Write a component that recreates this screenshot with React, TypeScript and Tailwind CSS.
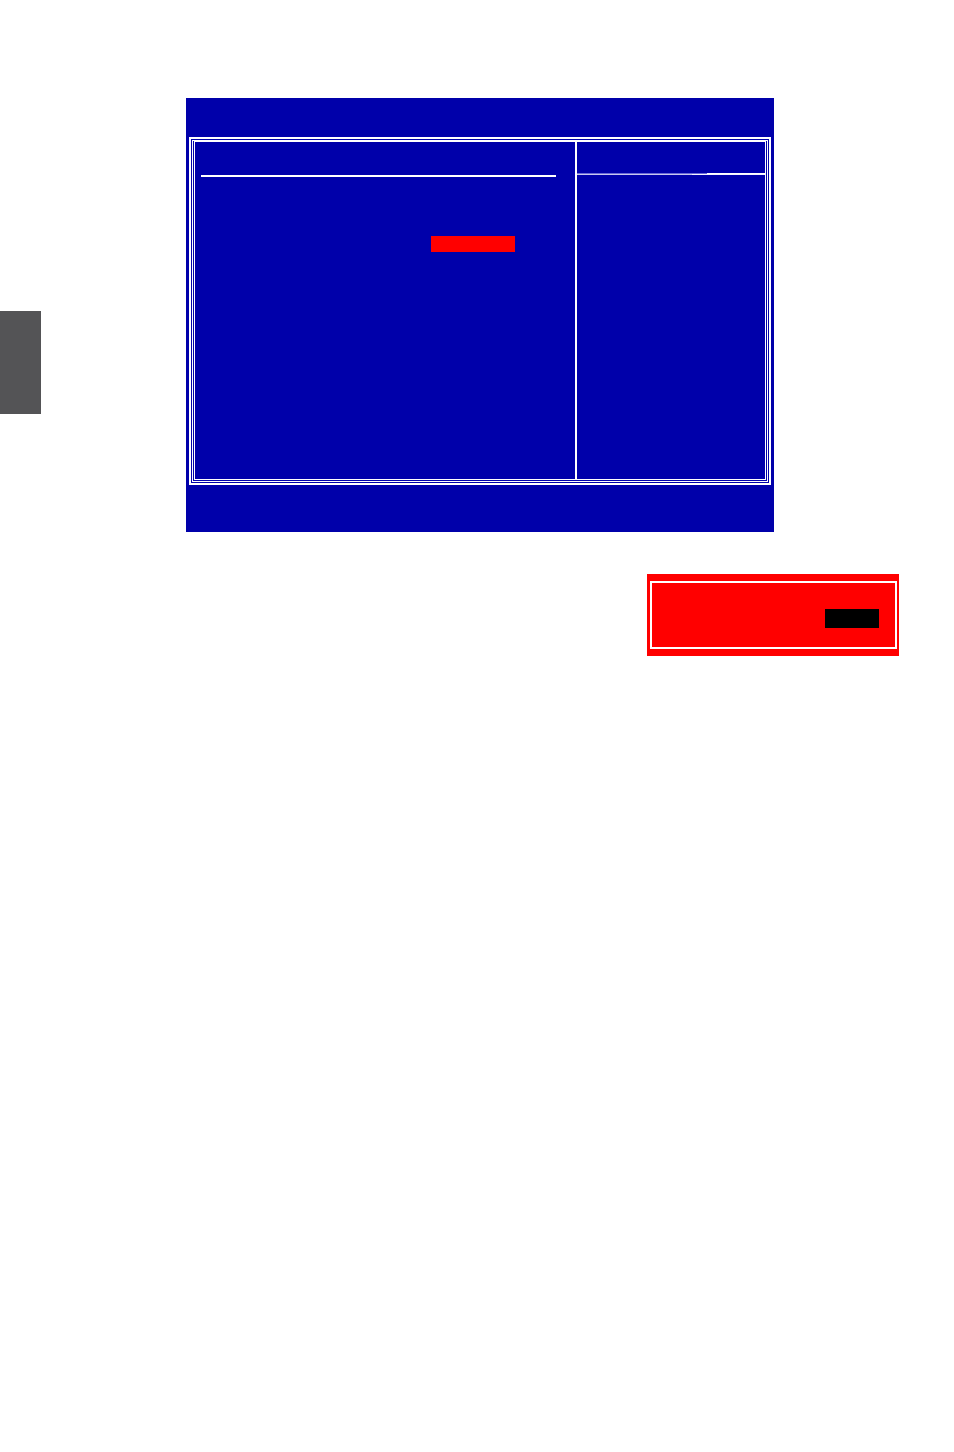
export default function App() {
  return (
    <div className="w-[954px] h-[1452px] bg-white flex flex-row" style={{ fontFamily: '"Liberation Sans", Arial, sans-serif' }}>
      {/* chapter tab on the page edge */}
      <div className="w-[41px] shrink-0 pt-[311px]">
        <div className="w-[41px] h-[103px] bg-[#545456]" />
      </div>

      <div className="ml-[145px] pt-[98px] flex flex-col">
        {/* BIOS setup screen */}
        <div className="w-[588px] h-[434px] bg-[#0000aa] pl-[3px] pt-[39px]">
          <div className="w-[582px] h-[348px] border-2 border-white px-[1px] pt-[1px] pb-[1px] flex">
            <div className="flex-1 border border-white px-[1px] pt-0 pb-[1px] flex">
              <div className="flex-1 border border-white flex flex-row">
                {/* item list */}
                <div className="w-[380px] flex flex-col">
                  <div className="ml-[6px] mt-[33px] w-[355px] h-[2px] bg-white" />
                  <div className="ml-[236px] mt-[59px] w-[84px] h-[16px] bg-[#ff0000]" />
                </div>
                <div className="w-[2px] bg-white" />
                {/* help pane */}
                <div className="flex-1 flex flex-col">
                  <div className="mt-[31px] h-[1px] w-full bg-[linear-gradient(to_right,#6a6ad8_0%,#6a6ad8_69%,#ffffff_69%,#ffffff_100%)]" />
                  <div className="h-[1px] w-full bg-[linear-gradient(to_right,#c8c8ee_0%,#c8c8ee_61%,#f4f4ff_61%,#f4f4ff_100%)]" />
                </div>
              </div>
            </div>
          </div>
        </div>

        {/* highlighted value box */}
        <div className="ml-[461px] mt-[42px] w-[252px] h-[82px] bg-[#ff0000] pl-[3px] pr-[2px] pt-[7px] pb-[7px] flex">
          <div className="flex-1 border-2 border-white flex flex-col">
            <div className="ml-[173px] mt-[26px] w-[54px] h-[19px] bg-black" />
          </div>
        </div>
      </div>
    </div>
  );
}
